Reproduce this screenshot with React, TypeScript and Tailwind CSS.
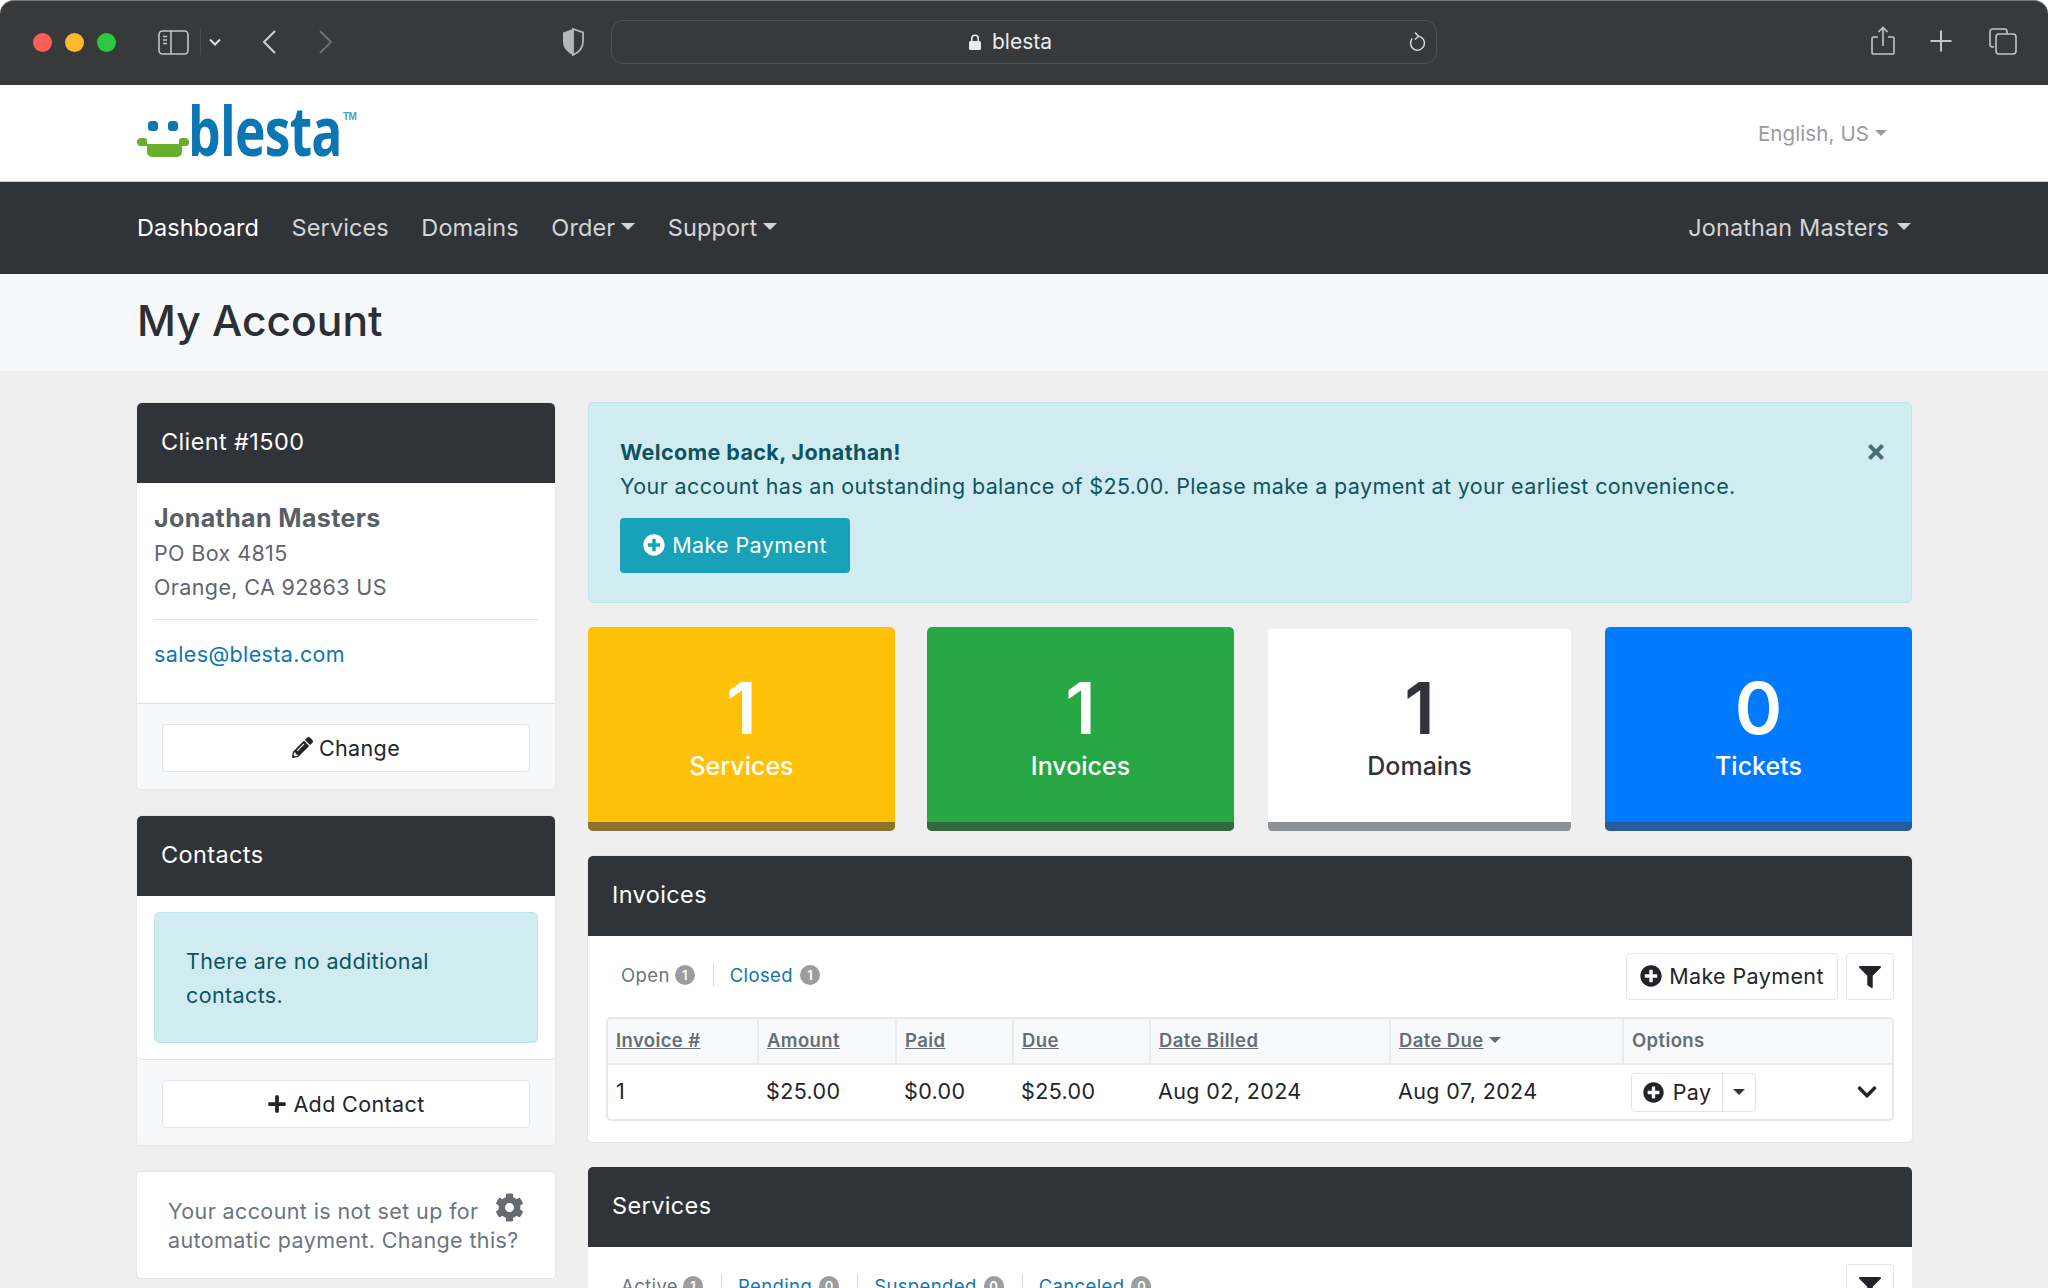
import type { ReactNode } from "react"
import { FaChevronDown, FaCog, FaFilter, FaPencilAlt, FaPlus, FaPlusCircle, FaTimes } from "react-icons/fa"

const stats = [
  { value: "1", label: "Services", box: "bg-[#ffc107] text-white", top: "pt-[45px]", bar: "bg-[#8f7230]" },
  { value: "1", label: "Invoices", box: "bg-[#28a745] text-white", top: "pt-[45px]", bar: "bg-[#32683e]" },
  { value: "1", label: "Domains", box: "bg-white text-[#303338] border-t-2 border-x-2 border-[#efefef]", top: "pt-[43px]", bar: "bg-[#8e9193]" },
  { value: "0", label: "Tickets", box: "bg-[#007bff] text-white", top: "pt-[45px]", bar: "bg-[#2b5a9e]" },
]

function Caret({ className = "" }: { className?: string }) {
  return <span className={`inline-block border-x-[6px] border-t-[6px] border-x-transparent border-t-current ${className}`} />
}

function SafariBar() {
  return (
    <div className="h-[85px] shrink-0 flex items-center pb-[2px] rounded-t-[14px] bg-[#38393b] border-t border-[#77787a] relative text-[#c4c5c6] tracking-normal">
      <div className="flex items-center gap-[13px] ml-[33px]">
        <span className="w-[19px] h-[19px] rounded-full bg-[#fb5f57]" />
        <span className="w-[19px] h-[19px] rounded-full bg-[#fcb82e]" />
        <span className="w-[19px] h-[19px] rounded-full bg-[#2bc840]" />
      </div>
      <svg className="ml-[42px]" width="31" height="25" viewBox="0 0 31 25" fill="none" stroke="currentColor" strokeWidth="1.6">
        <rect x="1" y="1" width="29" height="23" rx="3.5" />
        <path d="M13 1v23" />
        <path d="M5 6.5h4M5 10h4M5 13.5h4" />
      </svg>
      <span className="w-px h-[26px] bg-[#4c4d4f] ml-[11px]" />
      <svg className="ml-[8px]" width="12" height="9" viewBox="0 0 12 9" fill="none" stroke="#e0e0e0" strokeWidth="2">
        <path d="M1 1.5l5 5 5-5" />
      </svg>
      <svg className="ml-[40px]" width="16" height="26" viewBox="0 0 16 26" fill="none" stroke="#d0d1d2" strokeWidth="2">
        <path d="M14 2L3 13l11 11" />
      </svg>
      <svg className="ml-[41px]" width="16" height="26" viewBox="0 0 16 26" fill="none" stroke="#6d6e70" strokeWidth="2">
        <path d="M2 2l11 11L2 24" />
      </svg>
      <svg className="ml-[227px]" width="24" height="28" viewBox="0 0 24 28">
        <path d="M12 1L2 4.5v9C2 20 6.5 24.5 12 27z" fill="#b5b6b7" />
        <path d="M12 1l10 3.5v9C22 20 17.5 24.5 12 27z" fill="none" stroke="#b5b6b7" strokeWidth="1.8" />
      </svg>
      <div className="ml-[26px] w-[826px] h-[44px] rounded-[12px] border border-[#505153] flex items-center relative">
        <div className="flex-1 flex items-center justify-center gap-[10px] text-[#ebebeb] text-[21px] pr-[28px]">
          <svg width="14" height="18" viewBox="0 0 14 18" fill="currentColor">
            <path d="M3 8V5.5a4 4 0 0 1 8 0V8h.5A1.5 1.5 0 0 1 13 9.5v6a1.5 1.5 0 0 1-1.5 1.5h-9A1.5 1.5 0 0 1 1 15.5v-6A1.5 1.5 0 0 1 2.5 8zm1.6 0h4.8V5.5a2.4 2.4 0 0 0-4.8 0z" />
          </svg>
          blesta
        </div>
        <svg className="absolute right-[10px] top-[10px]" width="18" height="22" viewBox="0 0 18 22" fill="none" stroke="#d6d7d8" strokeWidth="1.5">
          <path d="M10 5.2a7 7 0 1 1-5.8 2.4" />
          <path d="M7 1.5l3.5 3.7L7 8.5" />
        </svg>
      </div>
      <div className="absolute right-[31px] top-[25px] flex items-center">
        <svg width="26" height="30" viewBox="0 0 26 30" fill="none" stroke="currentColor" strokeWidth="1.6">
          <path d="M8 11H3.5A1.5 1.5 0 0 0 2 12.5v14A1.5 1.5 0 0 0 3.5 28h19a1.5 1.5 0 0 0 1.5-1.5v-14a1.5 1.5 0 0 0-1.5-1.5H18" />
          <path d="M13 20V1.5M8.5 6L13 1.5 17.5 6" />
        </svg>
        <svg className="ml-[33px]" width="24" height="24" viewBox="0 0 24 24" fill="none" stroke="currentColor" strokeWidth="2">
          <path d="M12 1.5v21M1.5 12h21" />
        </svg>
        <svg className="ml-[36px]" width="28" height="28" viewBox="0 0 28 28" fill="none" stroke="currentColor" strokeWidth="1.6">
          <path d="M5 20H3.5A2.5 2.5 0 0 1 1 17.5v-13A2.5 2.5 0 0 1 3.5 2h12A2.5 2.5 0 0 1 18 4.5V7" />
          <rect x="7" y="7" width="20" height="20" rx="3" />
        </svg>
      </div>
    </div>
  )
}

function Logo() {
  return (
    <div className="flex items-end h-[50px] w-[218px] relative">
      <svg className="shrink-0" width="52" height="37" viewBox="0 0 52 37">
        <rect x="11" y="0" width="10" height="10" rx="3.5" fill="#0a76b3" />
        <rect x="31" y="0" width="10" height="10" rx="3.5" fill="#0a76b3" />
        <path d="M0 21a4 4 0 0 1 4-4h3a3 3 0 0 1 3 3v3h32v-3a3 3 0 0 1 3-3h3a4 4 0 0 1 4 4v2a4 4 0 0 1-4 2h-3v6a5 5 0 0 1-5 5H15a5 5 0 0 1-5-5v-6H5a4 4 0 0 1-5-3z" fill="#69ae2c" />
      </svg>
      <span className="absolute left-[51px] top-[-16px] font-['Open_Sans',sans-serif] font-bold text-[68px] leading-[76px] text-[#0a76b3] origin-left scale-x-[0.76] tracking-[-1px]">blesta</span>
      <span className="absolute left-[206px] top-[3px] font-['Liberation_Sans',sans-serif] text-[10px] leading-[12px] font-bold text-[#4f9cc9] tracking-[-0.5px]">TM</span>
    </div>
  )
}

function CardHeader({ children }: { children: ReactNode }) {
  return <div className="h-[80px] flex items-center px-[24px] pb-[2px] bg-[#303338] text-white text-[23.5px] rounded-t-[5px]">{children}</div>
}

function SideButton({ icon, label }: { icon: ReactNode; label: string }) {
  return (
    <div className="h-[48px] flex items-center justify-center gap-[6px] pb-[1px] bg-white border border-[#e3e5e8] rounded-[4px] text-[#212529]">
      {icon}
      {label}
    </div>
  )
}

function Tab({ label, count, link, divider }: { label: string; count: string; link?: boolean; divider?: boolean }) {
  return (
    <div className={`flex items-center h-[24px] ${divider ? "gap-[7px] border-l border-[#d8dadc] ml-[18px] pl-[16px]" : "gap-[5px]"}`}>
      <span className={link ? "text-[#0f76ad]" : "text-[#6c757d]"}>{label}</span>
      <span className="w-[20px] h-[20px] rounded-full bg-[#9a9c9e] text-white text-[13px] font-semibold flex items-center justify-center tracking-normal">{count}</span>
    </div>
  )
}

function FilterButton() {
  return (
    <div className="w-[48px] h-[47px] flex items-center justify-center bg-white border border-[#e3e5e8] rounded-[4px] text-[#212529] text-[22px]">
      <FaFilter />
    </div>
  )
}

function SortHead({ label, width }: { label: ReactNode; width: string }) {
  return (
    <th className={`${width} h-[45px] px-[8px] pb-[2px] text-left font-semibold text-[18.5px] text-[#666d73] border-r-2 border-[#e9ebed] last:border-r-0`}>
      {label}
    </th>
  )
}

function InvoicesPanel() {
  return (
    <div className="rounded-[5px] bg-white shadow-[0_0_0_1px_#e6e7e9]">
      <CardHeader>Invoices</CardHeader>
      <div className="px-[18px] pt-[17px] pb-[21px]">
        <div className="flex items-center justify-between h-[47px]">
          <div className="flex items-center pl-[15px] pb-[3px] text-[18.5px]">
            <Tab label="Open" count="1" />
            <Tab label="Closed" count="1" link divider />
          </div>
          <div className="flex items-center gap-[8px]">
            <div className="w-[212px] h-[47px] flex items-center justify-center gap-[7px] pb-[1px] bg-white border border-[#e3e5e8] rounded-[4px] text-[#212529]">
              <FaPlusCircle className="text-[22px]" />
              Make Payment
            </div>
            <FilterButton />
          </div>
        </div>
        <div className="mt-[17px] border-2 border-[#e6e8ea] rounded-[5px] overflow-hidden">
          <table className="w-full table-fixed border-collapse">
            <thead>
              <tr className="bg-[#f8f9fa] border-b-2 border-[#e9ebed]">
                <SortHead width="w-[150px]" label={<span className="underline">Invoice #</span>} />
                <SortHead width="w-[138px]" label={<span className="underline">Amount</span>} />
                <SortHead width="w-[117px]" label={<span className="underline">Paid</span>} />
                <SortHead width="w-[137px]" label={<span className="underline">Due</span>} />
                <SortHead width="w-[240px]" label={<span className="underline">Date Billed</span>} />
                <SortHead width="w-[233px]" label={<span className="underline inline-flex items-center gap-[5px]">Date Due <Caret /></span>} />
                <SortHead width="" label="Options" />
              </tr>
            </thead>
            <tbody className="text-[#212529]">
              <tr className="h-[55px]">
                <td className="px-[8px] pb-[2px]">1</td>
                <td className="px-[8px] pb-[2px]">$25.00</td>
                <td className="px-[8px] pb-[2px]">$0.00</td>
                <td className="px-[8px] pb-[2px]">$25.00</td>
                <td className="px-[8px] pb-[2px]">Aug 02, 2024</td>
                <td className="px-[8px] pb-[2px]">Aug 07, 2024</td>
                <td className="px-[8px]">
                  <div className="flex items-center justify-between pr-[6px]">
                    <div className="flex items-center h-[39px] border border-[#e3e5e8] rounded-[4px]">
                      <span className="w-[91px] h-full flex items-center justify-center gap-[9px] border-r border-[#e3e5e8]">
                        <FaPlusCircle className="text-[21px]" />
                        Pay
                      </span>
                      <span className="w-[32px] flex justify-center text-[#303338]">
                        <Caret />
                      </span>
                    </div>
                    <FaChevronDown className="text-[22px]" />
                  </div>
                </td>
              </tr>
            </tbody>
          </table>
        </div>
      </div>
    </div>
  )
}

function ServicesPanel() {
  return (
    <div className="rounded-[5px] bg-white">
      <CardHeader>Services</CardHeader>
      <div className="px-[18px] pt-[17px] flex items-center justify-between h-[64px]">
        <div className="flex items-center pl-[15px] pb-[3px] text-[18.5px]">
          <Tab label="Active" count="1" />
          <Tab label="Pending" count="0" link divider />
          <Tab label="Suspended" count="0" link divider />
          <Tab label="Canceled" count="0" link divider />
        </div>
        <FilterButton />
      </div>
    </div>
  )
}

export default function App() {
  return (
    <div className="w-[2048px] h-[1288px] overflow-hidden flex flex-col bg-white font-['Inter',sans-serif] text-[21.5px] leading-[34px] tracking-[0.38px]">
      <SafariBar />
      <header className="h-[97px] shrink-0 flex items-center justify-between pl-[137px] pr-[161px] border-b border-[#c9cbce]">
        <Logo />
        <div className="flex items-center gap-[6px] pt-[2px] text-[#999b9d] text-[20.5px] tracking-[0.1px]">
          English, US
          <Caret className="border-x-[5px] border-t-[5px] mb-[3px]" />
        </div>
      </header>
      <nav className="h-[92px] shrink-0 flex items-center justify-between px-[137px] pb-[1px] bg-[#303338] text-[#d4d5d7] text-[23.5px] tracking-[0.1px]">
        <div className="flex items-center gap-[32.5px]">
          <span className="text-white">Dashboard</span>
          <span>Services</span>
          <span>Domains</span>
          <span className="flex items-center gap-[6px]">Order <Caret className="border-x-[7px] border-t-[7px] mb-[3px]" /></span>
          <span className="flex items-center gap-[6px]">Support <Caret className="border-x-[7px] border-t-[7px] mb-[3px]" /></span>
        </div>
        <span className="flex items-center gap-[8px]">Jonathan Masters <Caret className="border-x-[7px] border-t-[7px] mb-[3px]" /></span>
      </nav>
      <div className="h-[97px] shrink-0 flex items-center pl-[137px] pb-[3px] bg-[#f6f8fb] text-[#2c2f33] text-[42.6px] font-medium tracking-normal">My Account</div>
      <main className="flex-1 bg-[#efefef] pt-[31px] px-[136px] flex gap-[32px] items-start">
        <aside className="w-[420px] shrink-0 flex flex-col gap-[25px]">
          <section className="rounded-[5px] bg-[#f7f8f9] border border-[#e6e7e9] h-[388px]">
            <CardHeader>Client #1500</CardHeader>
            <div className="bg-white border-b border-[#dfe1e3] h-[221px] px-[17px] pt-[18px] text-[#5f666c]">
              <div className="font-bold text-[25px] text-[#585f65]">Jonathan Masters</div>
              <div className="mt-[1px]">PO Box 4815</div>
              <div>Orange, CA 92863 US</div>
              <hr className="mt-[15px] mb-[17px] border-[#e3e5e7]" />
              <div className="text-[#0f76ad]">sales@blesta.com</div>
            </div>
            <div className="px-[25px] pt-[20px]">
              <SideButton icon={<FaPencilAlt className="text-[21px]" />} label="Change" />
            </div>
          </section>
          <section className="rounded-[5px] bg-[#f7f8f9] border border-[#e6e7e9] h-[331px]">
            <CardHeader>Contacts</CardHeader>
            <div className="bg-white border-b border-[#dfe1e3] rounded-b-[5px] h-[164px] px-[17px] pt-[16px]">
              <div className="h-[131px] rounded-[5px] bg-[#d1ecf1] border border-[#bee5eb] text-[#0c5460] px-[31px] py-[31px]">
                There are no additional contacts.
              </div>
            </div>
            <div className="px-[25px] pt-[20px]">
              <SideButton icon={<FaPlus className="text-[20px]" />} label="Add Contact" />
            </div>
          </section>
          <section className="rounded-[5px] bg-white border border-[#e6e7e9] h-[108px] pl-[31px] pr-[24px] pt-[25px] text-[#6c757d] leading-[29px] relative">
            Your account is not set up for automatic payment. Change this?
            <FaCog className="absolute right-[31px] top-[21px] text-[29px] text-[#646b71]" />
          </section>
        </aside>
        <div className="flex-1 flex flex-col gap-[25px]">
          <div className="h-[201px] rounded-[5px] bg-[#d1ecf1] border border-[#bee5eb] text-[#0c5460] pl-[31px] pt-[32px] relative">
            <div className="font-bold">Welcome back, Jonathan!</div>
            <div>Your account has an outstanding balance of $25.00. Please make a payment at your earliest convenience.</div>
            <div className="mt-[15px] w-[230px] h-[55px] flex items-center justify-center gap-[7px] pb-[1px] rounded-[4px] bg-[#17a2b8] text-white">
              <FaPlusCircle className="text-[22px]" />
              Make Payment
            </div>
            <FaTimes className="absolute right-[24px] top-[38px] text-[22px] text-[#4a6f78]" />
          </div>
          <div className="grid grid-cols-4 gap-[32px] -mt-[1px]">
            {stats.map((stat) => (
              <div key={stat.label} className={`h-[204px] flex flex-col rounded-[5px] overflow-hidden ${stat.box}`}>
                <div className={`flex-1 flex flex-col items-center ${stat.top}`}>
                  <div className="text-[72px] leading-[72px] font-semibold tracking-normal">{stat.value}</div>
                  <div className="mt-[5px] text-[25px] font-medium tracking-normal">{stat.label}</div>
                </div>
                <div className={`h-[9px] ${stat.bar}`} />
              </div>
            ))}
          </div>
          <InvoicesPanel />
          <ServicesPanel />
        </div>
      </main>
    </div>
  )
}
